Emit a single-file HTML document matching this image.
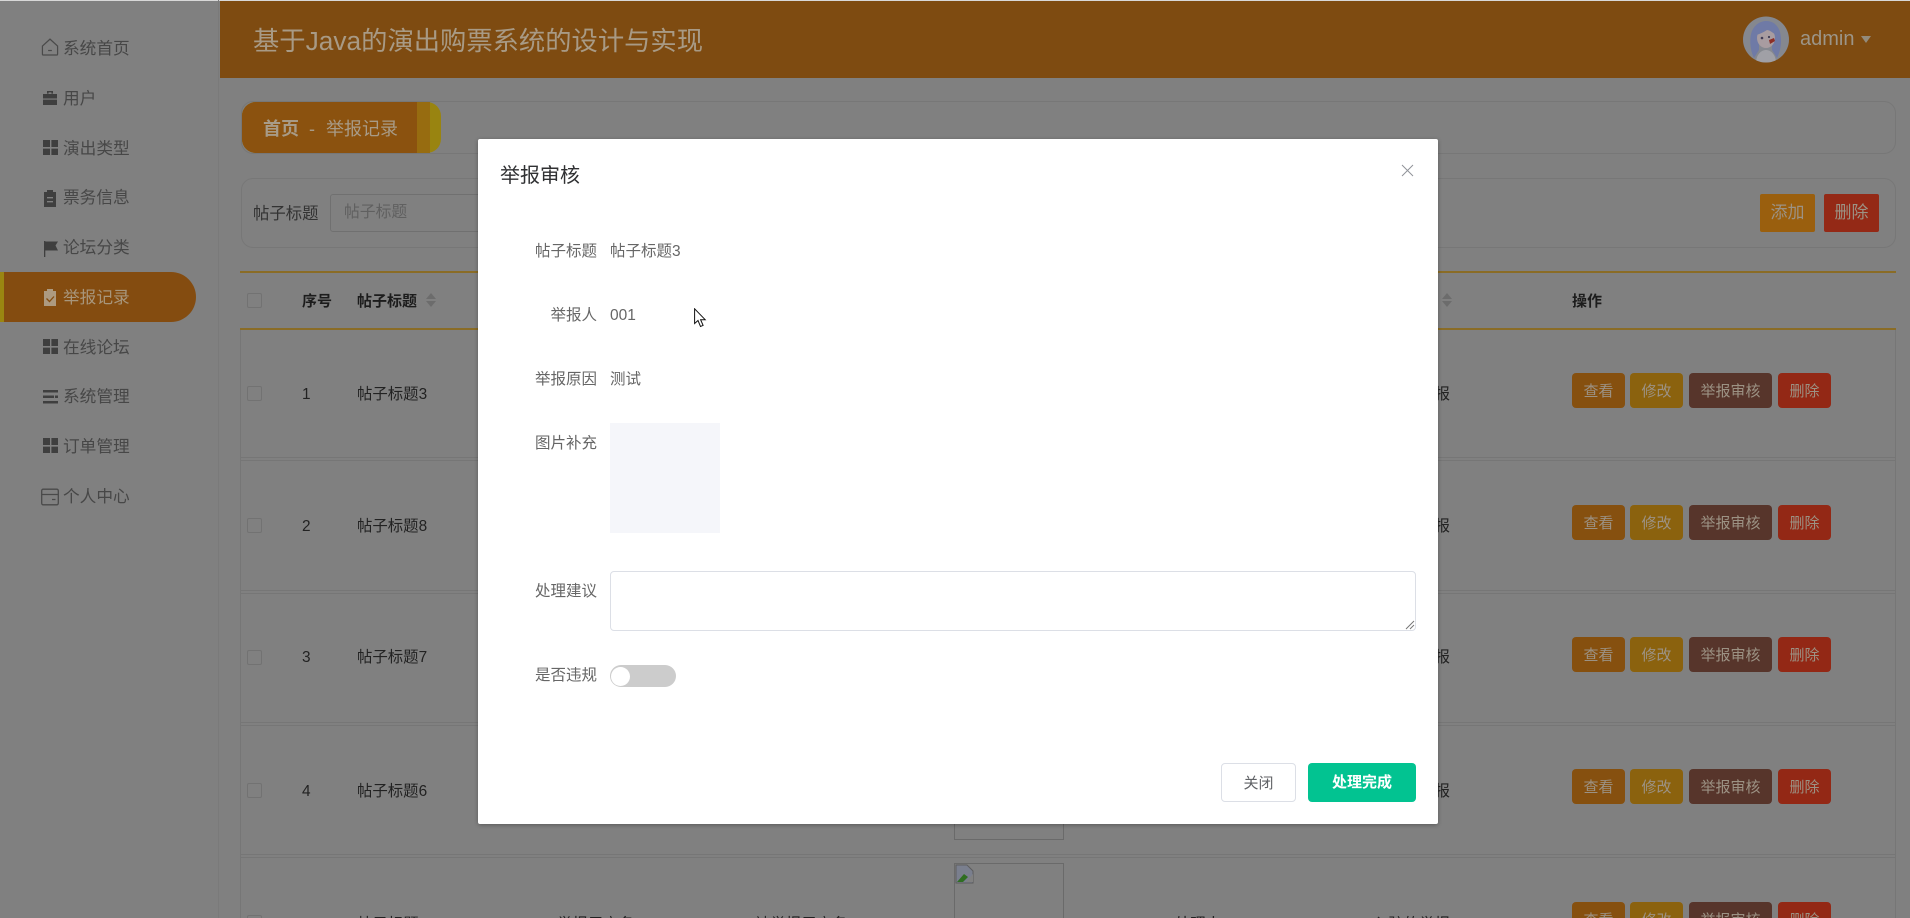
<!DOCTYPE html>
<html lang="zh-CN">
<head>
<meta charset="utf-8">
<title>举报记录</title>
<style>
html,body{margin:0;padding:0;width:1910px;height:918px;overflow:hidden;background:#808080}
#r{position:relative;width:1910px;height:918px;overflow:hidden;background:#808080;font-family:"Liberation Sans","Noto Sans CJK SC",sans-serif;filter:blur(.35px)}
.a{position:absolute;box-sizing:border-box}
.t{position:absolute;white-space:nowrap;line-height:20px;height:20px}
.s{font-size:16.700px;color:#474747;left:63px}
.c{font-size:15.400px;color:#222}
.l{font-size:15.500px;color:#666;width:100px;text-align:right;left:497px}
.v{font-size:15.500px;color:#666;left:610px}
.b{position:absolute;height:35px;border-radius:4px;text-align:center;line-height:37px;font-size:15px;color:#9c9284}
.ck{position:absolute;left:247px;width:15px;height:15px;border:1px solid #727272;border-radius:2px;box-sizing:border-box}
.sep{position:absolute;left:241px;width:1654px;height:4px;border-top:1px solid #767676;border-bottom:1px solid #767676;box-sizing:border-box}
.i{position:absolute;left:41px;width:18px;height:18px}
</style>
</head>
<body>
<div id="r">
  <div class="a" style="left:0;top:0;width:1910px;height:1px;background:#d8d8d8"></div>

  <!-- sidebar -->
  <div class="a" style="left:218px;top:0;width:1px;height:918px;background:#7a7a7a"></div>
  <div class="a" style="left:0;top:272px;width:196px;height:50px;background:#844c10;border-left:4px solid #9a8611;border-radius:0 25px 25px 0"></div>

  <svg class="i" style="top:38px" width="18" height="19" viewBox="0 0 18 19" fill="none" stroke="#4a4a4a" stroke-width="1.3"><path d="M1 8.500 9 1.200l8 7.300V17a1 1 0 0 1-1 1H2a1 1 0 0 1-1-1z"/><path d="M7 13.200h4"/></svg>
  <svg class="i" style="top:89px" viewBox="0 0 18 18"><path fill="#3f3f3f" d="M2 5h14v4.500H2zM2 10.600h14V16H2zM6 4.600V2h6v2.600h-1.600V3.400H7.600v1.200z"/></svg>
  <svg class="i" style="top:139px" viewBox="0 0 18 18"><path fill="#3f3f3f" d="M2 1h7v7H2zM10.400 1H17v7h-6.600zM2 9.600h7V16H2zM10.400 9.600H17V16h-6.600z"/></svg>
  <svg class="i" style="top:189px" viewBox="0 0 18 18"><path fill="#3f3f3f" fill-rule="evenodd" d="M3 3h3V1h6v2h3v15H3zM6 8v1.400h6V8zM6 12v1.400h6V12z"/></svg>
  <svg class="i" style="top:239px" viewBox="0 0 18 18"><path fill="#3f3f3f" d="M3 2h1.300v16H3zM4.300 2.500H17l-2.500 4 2.500 5H4.300z"/></svg>
  <svg class="i" style="top:288px" viewBox="0 0 18 18"><path fill="#ad9a80" d="M3 3h3V1h6v2h3v15H3z"/><path fill="none" stroke="#844c10" stroke-width="1.3" d="m5.500 10.500 3 3 4.500-5"/></svg>
  <svg class="i" style="top:338px" viewBox="0 0 18 18"><path fill="#3f3f3f" d="M2 1h7v7H2zM10.400 1H17v7h-6.600zM2 9.600h7V16H2zM10.400 9.600H17V16h-6.600z"/></svg>
  <svg class="i" style="top:388px" viewBox="0 0 18 18"><path fill="#3f3f3f" d="M2 2h15v2.500H2zM2 7.500h11V10H2zM14 7.500h3V10h-3zM2 13h15v2.500H2z"/></svg>
  <svg class="i" style="top:437px" viewBox="0 0 18 18"><path fill="#3f3f3f" d="M2 1h7v7H2zM10.400 1H17v7h-6.600zM2 9.600h7V16H2zM10.400 9.600H17V16h-6.600z"/></svg>
  <svg class="i" style="top:488px" width="18" height="17" viewBox="0 0 18 17" fill="none" stroke="#4a4a4a" stroke-width="1.3"><rect x=".7" y=".7" width="16.600" height="15.600" rx="1.500"/><path d="M1 6h16M11 11h3.500"/></svg>

  <div class="t s" style="top:39px">系统首页</div>
  <div class="t s" style="top:89px">用户</div>
  <div class="t s" style="top:139px">演出类型</div>
  <div class="t s" style="top:188px">票务信息</div>
  <div class="t s" style="top:238px">论坛分类</div>
  <div class="t s" style="top:288px;color:#a8967c">举报记录</div>
  <div class="t s" style="top:338px">在线论坛</div>
  <div class="t s" style="top:387px">系统管理</div>
  <div class="t s" style="top:437px">订单管理</div>
  <div class="t s" style="top:487px">个人中心</div>

  <!-- header -->
  <div class="a" style="left:220px;top:1px;width:1690px;height:77px;background:#7e4b11"></div>
  <div class="t" style="left:253px;top:27px;height:28px;line-height:28px;font-size:26.300px;color:#a89a85">基于Java的演出购票系统的设计与实现</div>
  <svg class="a" style="left:1743px;top:16px" width="46" height="47" viewBox="0 0 46 47">
    <defs><clipPath id="av"><circle cx="23" cy="23.500" r="23"/></clipPath></defs>
    <g clip-path="url(#av)">
      <rect width="46" height="47" fill="#85888f"/>
      <path fill="#6f7aa6" d="M11 42c-4-8-5-20-2-27 3-7 9-10 14-10 7 0 12 4 14 11 2 9 1 18-3 26l-5-8V18H16v16z"/>
      <ellipse cx="23" cy="22" rx="9" ry="10" fill="#a89ca0"/>
      <path fill="#6f7aa6" d="M13 19c2-7 7-9 11-9 5 0 9 3 9 9-4-3-7-5-9-5-3 2-7 4-11 5z"/>
      <path fill="#a0a0a6" d="M13 47c0-8 5-13 10-13s10 5 10 13z"/>
      <path fill="#8c2f28" d="M26 24l5-2 1 3-5 3z"/>
      <circle cx="19" cy="22" r="1.300" fill="#403c55"/>
      <circle cx="26" cy="21" r="1.100" fill="#403c55"/>
    </g>
  </svg>
  <div class="t" style="left:1800px;top:29px;font-size:20px;color:#9c9588">admin</div>
  <div class="a" style="left:1861px;top:36px;width:0;height:0;border-left:5.500px solid transparent;border-right:5.500px solid transparent;border-top:7px solid #938b7c"></div>

  <!-- breadcrumb -->
  <div class="a" style="left:241px;top:101px;width:1655px;height:53px;border:1px solid #777;border-radius:12px"></div>
  <div class="a" style="left:242px;top:102px;width:199px;height:51px;background:#998410;border-radius:14px"></div>
  <div class="a" style="left:242px;top:102px;width:188px;height:51px;background:#976c10;border-radius:14px 0 0 14px"></div>
  <div class="a" style="left:242px;top:102px;width:175px;height:51px;background:#8b520f;border-radius:14px 0 0 14px"></div>
  <div class="t" style="left:263px;top:119px;font-size:18px;font-weight:700;color:#a89b87">首页</div>
  <div class="t" style="left:309px;top:119px;font-size:18px;color:#a89b87">-</div>
  <div class="t" style="left:326px;top:119px;font-size:18px;color:#a89b87">举报记录</div>

  <!-- search bar -->
  <div class="a" style="left:241px;top:178px;width:1655px;height:70px;border:1px solid #777;border-radius:12px"></div>
  <div class="t" style="left:253px;top:204px;font-size:16.400px;color:#333">帖子标题</div>
  <div class="a" style="left:330px;top:194px;width:300px;height:38px;border:1px solid #707070;border-radius:3px"></div>
  <div class="t" style="left:344px;top:203px;font-size:15.800px;color:#606060">帖子标题</div>
  <div class="b" style="left:1760px;top:194px;width:55px;height:38px;line-height:38px;border-radius:2px;font-size:17px;background:#9a5f0e">添加</div>
  <div class="b" style="left:1824px;top:194px;width:55px;height:38px;line-height:38px;border-radius:2px;font-size:17px;background:#942916">删除</div>

  <!-- table -->
  <div class="a" style="left:240px;top:271px;width:1656px;height:2px;background:#8a6c26"></div>
  <div class="a" style="left:240px;top:328px;width:1656px;height:2px;background:#8a6c26"></div>
  <div class="a" style="left:240px;top:330px;width:1px;height:588px;background:#767676"></div>
  <div class="a" style="left:1895px;top:330px;width:1px;height:588px;background:#767676"></div>

  <div class="ck" style="top:293px"></div>
  <div class="t c" style="left:302px;top:292px;font-weight:700;font-size:15px;color:#1c1c1c">序号</div>
  <div class="t c" style="left:357px;top:292px;font-weight:700;font-size:15px;color:#1c1c1c">帖子标题</div>
  <div class="a" style="left:426px;top:293px;width:0;height:0;border:5px solid transparent;border-top:0;border-bottom:6px solid #6c6c6c"></div>
  <div class="a" style="left:426px;top:301px;width:0;height:0;border:5px solid transparent;border-bottom:0;border-top:6px solid #6c6c6c"></div>
  <div class="a" style="left:1442px;top:293px;width:0;height:0;border:5px solid transparent;border-top:0;border-bottom:6px solid #6c6c6c"></div>
  <div class="a" style="left:1442px;top:301px;width:0;height:0;border:5px solid transparent;border-bottom:0;border-top:6px solid #6c6c6c"></div>
  <div class="t c" style="left:1572px;top:292px;font-weight:700;font-size:15px;color:#1c1c1c">操作</div>

  <div class="sep" style="top:457px"></div>
  <div class="sep" style="top:590px"></div>
  <div class="sep" style="top:722px"></div>
  <div class="sep" style="top:854px"></div>

  <!-- row 1 -->
  <div class="ck" style="top:386px"></div>
  <div class="t c" style="left:302px;top:385px">1</div>
  <div class="t c" style="left:357px;top:385px">帖子标题3</div>
  <div class="t c" style="left:1373px;top:385px">入驻的举报</div>
  <div class="b" style="left:1572px;top:373px;width:53px;background:#86500f">查看</div>
  <div class="b" style="left:1630px;top:373px;width:53px;background:#8b620e">修改</div>
  <div class="b" style="left:1689px;top:373px;width:83px;background:#57352b">举报审核</div>
  <div class="b" style="left:1778px;top:373px;width:53px;background:#932815">删除</div>
  <!-- row 2 -->
  <div class="ck" style="top:518px"></div>
  <div class="t c" style="left:302px;top:517px">2</div>
  <div class="t c" style="left:357px;top:517px">帖子标题8</div>
  <div class="t c" style="left:1373px;top:517px">入驻的举报</div>
  <div class="b" style="left:1572px;top:505px;width:53px;background:#86500f">查看</div>
  <div class="b" style="left:1630px;top:505px;width:53px;background:#8b620e">修改</div>
  <div class="b" style="left:1689px;top:505px;width:83px;background:#57352b">举报审核</div>
  <div class="b" style="left:1778px;top:505px;width:53px;background:#932815">删除</div>
  <!-- row 3 -->
  <div class="ck" style="top:650px"></div>
  <div class="t c" style="left:302px;top:648px">3</div>
  <div class="t c" style="left:357px;top:648px">帖子标题7</div>
  <div class="t c" style="left:1373px;top:648px">入驻的举报</div>
  <div class="b" style="left:1572px;top:637px;width:53px;background:#86500f">查看</div>
  <div class="b" style="left:1630px;top:637px;width:53px;background:#8b620e">修改</div>
  <div class="b" style="left:1689px;top:637px;width:83px;background:#57352b">举报审核</div>
  <div class="b" style="left:1778px;top:637px;width:53px;background:#932815">删除</div>
  <!-- row 4 -->
  <div class="ck" style="top:783px"></div>
  <div class="t c" style="left:302px;top:782px">4</div>
  <div class="t c" style="left:357px;top:782px">帖子标题6</div>
  <div class="t c" style="left:1373px;top:782px">入驻的举报</div>
  <div class="a" style="left:954px;top:730px;width:110px;height:110px;border:1px solid #6a6a6a"></div>
  <div class="b" style="left:1572px;top:769px;width:53px;background:#86500f">查看</div>
  <div class="b" style="left:1630px;top:769px;width:53px;background:#8b620e">修改</div>
  <div class="b" style="left:1689px;top:769px;width:83px;background:#57352b">举报审核</div>
  <div class="b" style="left:1778px;top:769px;width:53px;background:#932815">删除</div>
  <!-- row 5 -->
  <div class="ck" style="top:915px"></div>
  <div class="t c" style="left:302px;top:915px">5</div>
  <div class="t c" style="left:357px;top:915px">帖子标题5</div>
  <div class="t c" style="left:557px;top:915px">举报用户名5</div>
  <div class="t c" style="left:755px;top:915px">被举报用户名5</div>
  <div class="t c" style="left:1175px;top:915px">处理人</div>
  <div class="t c" style="left:1373px;top:915px">入驻的举报</div>
  <div class="a" style="left:954px;top:863px;width:110px;height:55px;border:1px solid #6a6a6a;border-bottom:0"></div>
  <svg class="a" style="left:955px;top:864px" width="20" height="20" viewBox="0 0 20 20"><path fill="#7a7f8e" stroke="#5d5d5d" d="M1 1h11l6 6v12H1z"/><path fill="#2f6e22" d="M2 18l7-8 4 3-5 5z"/><path fill="#808080" d="M11 18l7-8v8z"/></svg>
  <div class="b" style="left:1572px;top:902px;width:53px;background:#86500f">查看</div>
  <div class="b" style="left:1630px;top:902px;width:53px;background:#8b620e">修改</div>
  <div class="b" style="left:1689px;top:902px;width:83px;background:#57352b">举报审核</div>
  <div class="b" style="left:1778px;top:902px;width:53px;background:#932815">删除</div>

  <!-- modal -->
  <div class="a" style="left:478px;top:139px;width:960px;height:685px;background:#fff;border-radius:2px;box-shadow:0 1px 4px rgba(0,0,0,.3)"></div>
  <div class="t" style="left:500px;top:166px;font-size:20px;color:#303133">举报审核</div>
  <svg class="a" style="left:1401px;top:164px" width="13" height="13" viewBox="0 0 13 13" fill="none" stroke="#909399" stroke-width="1"><path d="M1 1l11 11M12 1 1 12"/></svg>

  <div class="t l" style="top:242px">帖子标题</div>
  <div class="t v" style="top:242px">帖子标题3</div>
  <div class="t l" style="top:306px">举报人</div>
  <div class="t v" style="top:306px">001</div>
  <svg class="a" style="left:694px;top:308px" width="13" height="20" viewBox="0 0 13 20"><path fill="#fff" stroke="#111" stroke-width="1" d="M.6.8v14.700l3.400-3 2.500 6 2.600-1.100-2.500-5.700h4.600z"/></svg>
  <div class="t l" style="top:370px">举报原因</div>
  <div class="t v" style="top:370px">测试</div>
  <div class="t l" style="top:434px">图片补充</div>
  <div class="a" style="left:610px;top:423px;width:110px;height:110px;background:#f5f6fa"></div>
  <div class="t l" style="top:582px">处理建议</div>
  <div class="a" style="left:610px;top:571px;width:806px;height:60px;border:1px solid #dcdfe6;border-radius:4px;background:#fff"></div>
  <svg class="a" style="left:1405px;top:620px" width="10" height="10" viewBox="0 0 10 10" stroke="#777" stroke-width="1"><path d="M1 9 9 1M5 9l4-4"/></svg>
  <div class="t l" style="top:666px">是否违规</div>
  <div class="a" style="left:610px;top:665px;width:66px;height:22px;background:#ccc;border-radius:11px"></div>
  <div class="a" style="left:611px;top:666.500px;width:19px;height:19px;background:#fff;border-radius:50%"></div>

  <div class="a" style="left:1221px;top:763px;width:75px;height:39px;border:1px solid #dcdfe6;border-radius:4px;background:#fff;text-align:center;line-height:39px;font-size:15px;color:#606266">关闭</div>
  <div class="a" style="left:1308px;top:763px;width:108px;height:39px;border-radius:4px;background:#02c391;text-align:center;line-height:39px;font-size:15px;font-weight:700;color:#fff">处理完成</div>
</div>
</body>
</html>
